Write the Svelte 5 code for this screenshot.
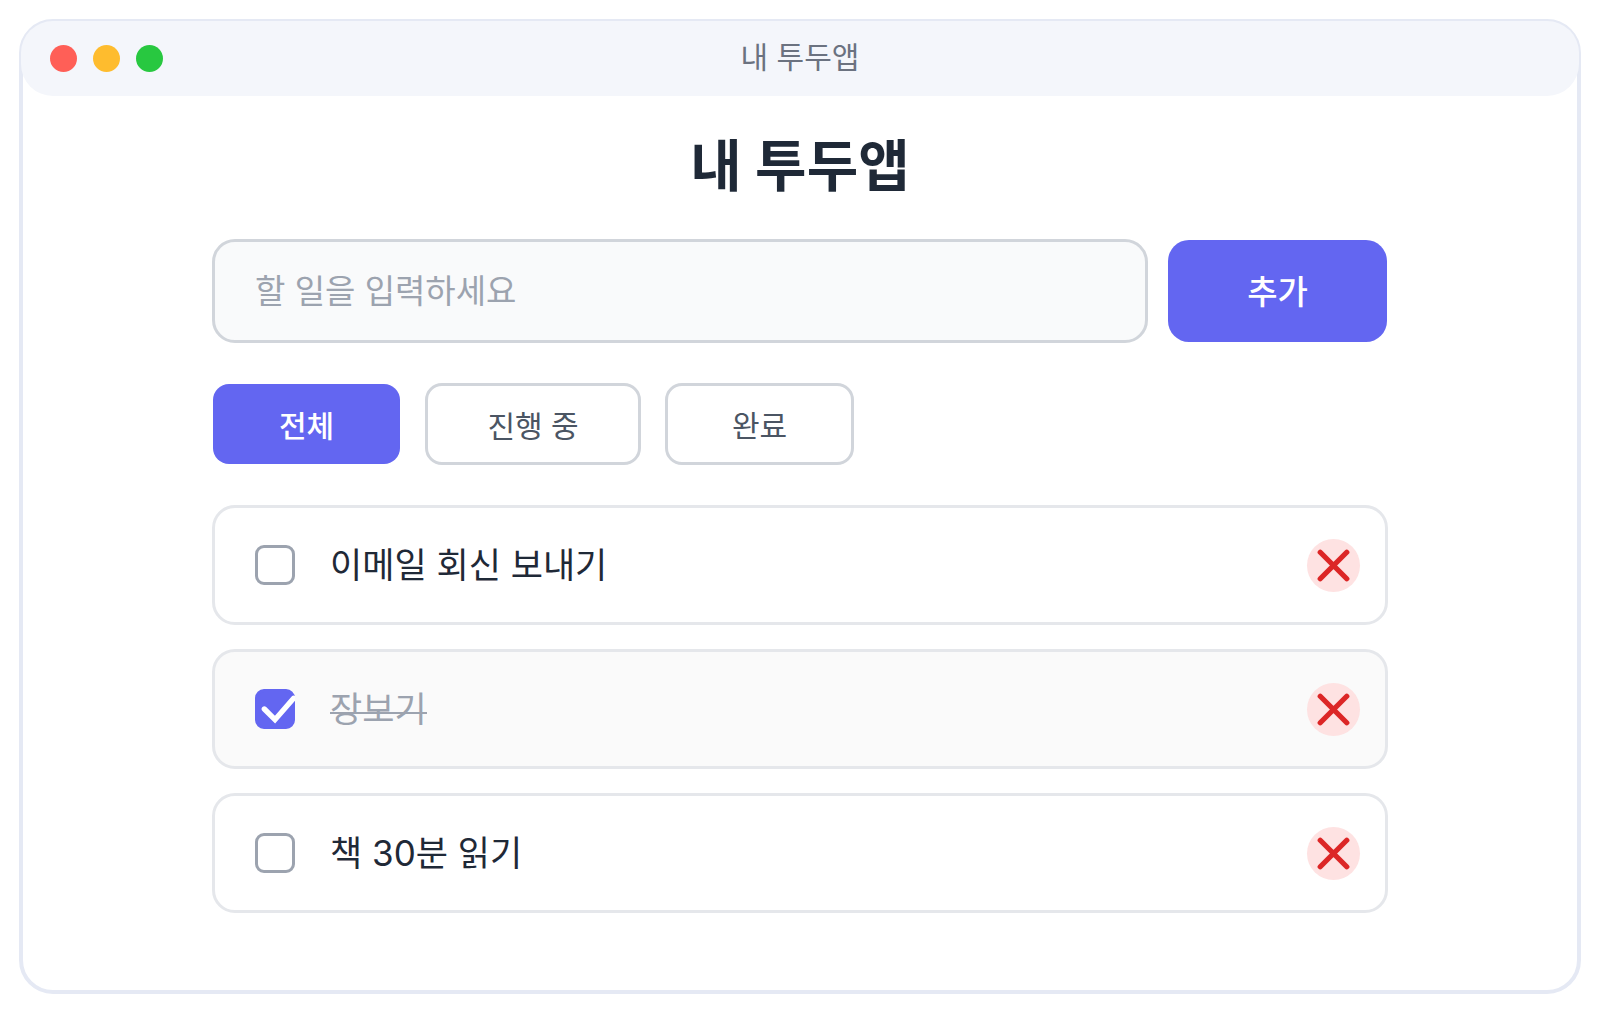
<script>
  const title = "내 투두앱";
  const filters = [
    { key: "all", label: "전체" },
    { key: "active", label: "진행 중" },
    { key: "done", label: "완료" },
  ];

  let filter = $state("all");
  let draft = $state("");
  let todos = $state([
    { id: 1, text: "이메일 회신 보내기", done: false },
    { id: 2, text: "장보기", done: true },
    { id: 3, text: "책 30분 읽기", done: false },
  ]);

  let visible = $derived(
    todos.filter((todo) => filter == "all" || todo.done == (filter == "done"))
  );

  const addTodo = (event) => {
    event.preventDefault();
    if (draft.trim() == "") return;
    todos.push({ id: Date.now(), text: draft.trim(), done: false });
    draft = "";
  };

  const removeTodo = (id) => {
    todos = todos.filter((todo) => todo.id != id);
  };
</script>

<div class="window">
  <header class="titlebar">
    <div class="lights" aria-hidden="true">
      <span class="light red"></span>
      <span class="light yellow"></span>
      <span class="light green"></span>
    </div>
    <span class="caption">{title}</span>
  </header>

  <main>
    <h1>{title}</h1>

    <form class="add" onsubmit={addTodo}>
      <input
        type="text"
        aria-label="할 일"
        placeholder="할 일을 입력하세요"
        bind:value={draft}
      />
      <button type="submit">추가</button>
    </form>

    <div class="filters">
      {#each filters as item (item.key)}
        <button
          type="button"
          class={item.key}
          class:selected={filter == item.key}
          aria-pressed={filter == item.key}
          onclick={() => (filter = item.key)}
        >
          {item.label}
        </button>
      {/each}
    </div>

    <ul>
      {#each visible as todo (todo.id)}
        <li class:done={todo.done}>
          <label>
            <span class="check">
              <input type="checkbox" bind:checked={todo.done} />
              {#if todo.done}
                <svg viewBox="0 0 15 15" aria-hidden="true">
                  <path d="M3.5 7.5 L7.5 11.5 L14.5 3.5" />
                </svg>
              {/if}
            </span>
            <span class="text">{todo.text}</span>
          </label>
          <button
            type="button"
            class="remove"
            aria-label="삭제"
            onclick={() => removeTodo(todo.id)}
          >
            <svg viewBox="0 0 20 20" aria-hidden="true">
              <path d="M5 5 L15 15 M15 5 L5 15" />
            </svg>
          </button>
        </li>
      {/each}
    </ul>
  </main>
</div>

<style>
  :global(body) {
    background: #ffffff;
    font-family: Inter, "Noto Sans CJK KR", sans-serif;
  }

  .window {
    box-sizing: border-box;
    margin: 19px;
    border: 4px solid #e5e9f4;
    border-radius: 34px;
    background: #ffffff;
  }

  /* The bar lies over the inner half of the window border */
  .titlebar {
    display: grid;
    grid-template-columns: 1fr auto 1fr;
    align-items: center;
    box-sizing: border-box;
    height: 75px;
    margin: -2px -2px 0;
    padding: 0 29px;
    border-radius: 32px;
    background: #f4f6fb;
  }

  .lights {
    display: flex;
    gap: 16px;
  }

  .light {
    width: 27px;
    height: 27px;
    border-radius: 50%;
  }

  .red {
    background: #ff5f57;
  }

  .yellow {
    background: #febc2e;
  }

  .green {
    background: #28c840;
  }

  .caption {
    padding-bottom: 3px;
    font-size: 30px;
    line-height: 40px;
    color: #6b7280;
  }

  main {
    padding: 34px 189px 77px;
  }

  h1 {
    margin: 0;
    font-size: 56px;
    font-weight: 700;
    line-height: 72px;
    text-align: center;
    color: #1f2937;
  }

  input,
  button {
    box-sizing: border-box;
    margin: 0;
    font-family: inherit;
  }

  button {
    cursor: pointer;
  }

  .add {
    display: flex;
    align-items: center;
    gap: 20px;
    margin-top: 37px;
    padding-right: 1px;
  }

  .add input {
    flex: 1;
    min-width: 0;
    height: 104px;
    padding: 0 40px;
    border: 3px solid #d1d5db;
    border-radius: 23px;
    background: #f9fafb;
    font-size: 33px;
    color: #1f2937;
  }

  .add input::placeholder {
    color: #9ca3af;
    opacity: 1;
  }

  .add button {
    width: 219px;
    height: 102px;
    padding: 0 0 2px;
    border: 0;
    border-radius: 21px;
    background: #6366f1;
    font-size: 33px;
    font-weight: 500;
    color: #ffffff;
  }

  .filters {
    display: flex;
    align-items: center;
    gap: 24px;
    margin-top: 40px;
  }

  .filters button {
    width: 189px;
    height: 82px;
    padding: 0;
    border: 3px solid #d1d5db;
    border-radius: 17px;
    background: #ffffff;
    font-size: 30px;
    color: #4b5563;
  }

  .filters .active {
    width: 216px;
  }

  .filters .selected {
    border: 1px solid transparent;
    background: #6366f1 padding-box;
    font-weight: 500;
    color: #ffffff;
  }

  ul {
    display: grid;
    gap: 24px;
    margin: 40px 0 0;
    padding: 0;
    list-style: none;
  }

  li {
    display: flex;
    align-items: center;
    justify-content: space-between;
    box-sizing: border-box;
    height: 120px;
    padding: 0 25px 0 40px;
    border: 3px solid #e5e7eb;
    border-radius: 23px;
    background: #ffffff;
  }

  li.done {
    background: #fafafa;
  }

  label {
    display: flex;
    align-items: center;
    gap: 35px;
  }

  .check {
    display: grid;
    width: 40px;
    height: 40px;
  }

  .check input,
  .check svg {
    grid-area: 1 / 1;
    width: 40px;
    height: 40px;
  }

  .check input {
    appearance: none;
    border: 3px solid #9ca3af;
    border-radius: 9px;
    background: #ffffff;
  }

  .check input:checked {
    border-color: #6366f1;
    background: #6366f1;
  }

  svg {
    display: block;
    fill: none;
    stroke-width: 2;
    stroke-linecap: round;
  }

  .check svg {
    z-index: 1;
    stroke: #ffffff;
    pointer-events: none;
  }

  .text {
    font-size: 35px;
    line-height: 48px;
    color: #1f2937;
  }

  /* Drawn as a background so that the line sits low and thin behind the text */
  .done .text {
    background: linear-gradient(#9ca3af, #9ca3af) 0 27px / 100% 2px no-repeat;
    color: #9ca3af;
  }

  .remove {
    width: 53px;
    height: 53px;
    padding: 0;
    border: 0;
    border-radius: 50%;
    background: #fee2e2;
  }

  .remove svg {
    stroke: #dc2626;
  }
</style>
